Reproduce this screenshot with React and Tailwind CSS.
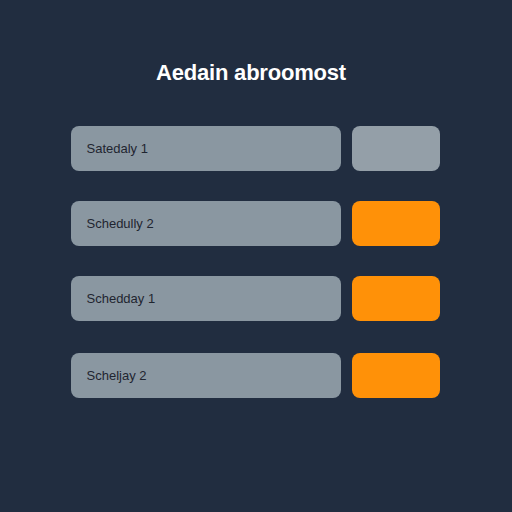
export default function App() {
  const rows = [
    { label: "Satedaly 1", accent: false, gap: "mt-0" },
    { label: "Schedully 2", accent: true, gap: "mt-[30px]" },
    { label: "Schedday 1", accent: true, gap: "mt-[30px]" },
    { label: "Scheljay 2", accent: true, gap: "mt-[32px]" },
  ];

  return (
    <div className="w-[512px] h-[512px] bg-[#212d40] font-['Liberation_Sans',Arial,sans-serif] flex flex-col items-center">
      <h1 className="mt-[59px] mr-[10px] text-[22px] leading-[28px] font-bold text-white tracking-[-0.2px]">
        Aedain abroomost
      </h1>
      <div className="mt-[39px] mr-[2px] flex flex-col">
        {rows.map((row) => (
          <div key={row.label} className={`flex gap-[11px] ${row.gap}`}>
            <div className="w-[270px] h-[45px] rounded-lg bg-[#8a97a1] flex items-center pl-[16px] text-[13px] text-[#1f2530]">
              {row.label}
            </div>
            <div
              className={`w-[88px] h-[45px] rounded-lg ${
                row.accent ? "bg-[#ff9108]" : "bg-[#949fa8]"
              }`}
            />
          </div>
        ))}
      </div>
    </div>
  );
}
